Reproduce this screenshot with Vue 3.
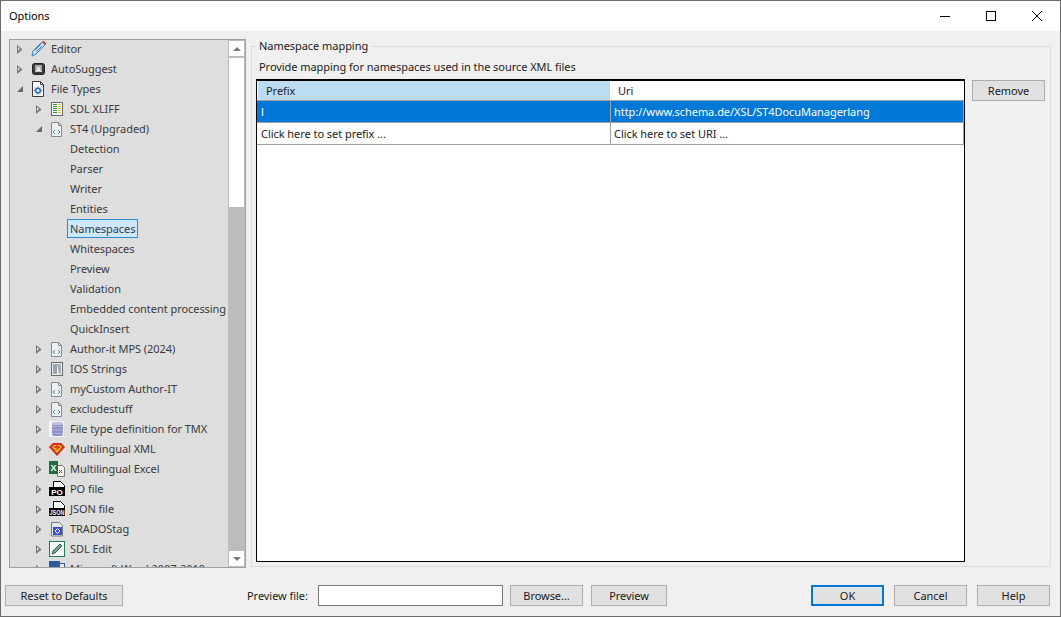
<script setup>
const rows = [
  { label: 'Editor', level: 0, arrow: 'closed', icon: 'pencil' },
  { label: 'AutoSuggest', level: 0, arrow: 'closed', icon: 'key' },
  { label: 'File Types', level: 0, arrow: 'open', icon: 'gear' },
  { label: 'SDL XLIFF', level: 1, arrow: 'closed', icon: 'xliff' },
  { label: 'ST4 (Upgraded)', level: 1, arrow: 'open', icon: 'code' },
  { label: 'Detection', level: 2 },
  { label: 'Parser', level: 2 },
  { label: 'Writer', level: 2 },
  { label: 'Entities', level: 2 },
  { label: 'Namespaces', level: 2, selected: true },
  { label: 'Whitespaces', level: 2 },
  { label: 'Preview', level: 2 },
  { label: 'Validation', level: 2 },
  { label: 'Embedded content processing', level: 2 },
  { label: 'QuickInsert', level: 2 },
  { label: 'Author-it MPS (2024)', level: 1, arrow: 'closed', icon: 'code' },
  { label: 'IOS Strings', level: 1, arrow: 'closed', icon: 'ios' },
  { label: 'myCustom Author-IT', level: 1, arrow: 'closed', icon: 'code' },
  { label: 'excludestuff', level: 1, arrow: 'closed', icon: 'code' },
  { label: 'File type definition for TMX', level: 1, arrow: 'closed', icon: 'db' },
  { label: 'Multilingual XML', level: 1, arrow: 'closed', icon: 'shield' },
  { label: 'Multilingual Excel', level: 1, arrow: 'closed', icon: 'excel' },
  { label: 'PO file', level: 1, arrow: 'closed', icon: 'po' },
  { label: 'JSON file', level: 1, arrow: 'closed', icon: 'json' },
  { label: 'TRADOStag', level: 1, arrow: 'closed', icon: 'trados' },
  { label: 'SDL Edit', level: 1, arrow: 'closed', icon: 'edit' },
  { label: 'Microsoft Word 2007-2019', level: 1, arrow: 'closed', icon: 'word' }
]
</script>

<template>
  <div class="window">
    <header class="titlebar">
      <span class="title">Options</span>
      <div class="controls">
        <svg width="46" height="30" viewBox="0 0 46 30"><path d="M18 15.500h10" stroke="#000" fill="none" /></svg>
        <svg width="46" height="30" viewBox="0 0 46 30"><rect x="18.500" y="10.500" width="9" height="9" stroke="#000" fill="none" /></svg>
        <svg width="46" height="30" viewBox="0 0 46 30"><path d="M18 10l10 10M28 10L18 20" stroke="#000" fill="none" /></svg>
      </div>
    </header>

    <main class="content">
      <nav class="tree">
        <div class="tree-list">
          <div v-for="row in rows" :key="row.label" class="row" :class="'lv' + row.level">
            <span v-if="row.level < 2" class="arrow" :class="row.arrow"></span>
            <svg v-if="row.icon" class="icon" width="18" height="18" viewBox="0 0 18 18">
              <template v-if="row.icon === 'pencil'">
                <path d="M2 16l1-5L12 2l3 3-9 9z" fill="#cfe2f5" stroke="#3f7fc0" />
                <path d="M5 10l6-6M6 12l6-6" stroke="#3f7fc0" fill="none" />
                <path d="M12 2l1.500-1.500 3 3L15 5z" fill="#d04a50" />
              </template>
              <template v-else-if="row.icon === 'key'">
                <rect x="2.500" y="3.500" width="12" height="11" rx="2" fill="#3c3c3c" stroke="#222" />
                <rect x="5" y="5" width="7" height="7" fill="#a8a8a8" />
                <text x="8.500" y="11.500" class="gl" font-size="7" fill="#fff">A</text>
              </template>
              <template v-else-if="row.icon === 'gear'">
                <path d="M2.500 1.500h8l3 3v12h-11z" fill="#f7f7f7" stroke="#3c3c3c" />
                <path d="M10.500 1.500v3h3" fill="none" stroke="#3c3c3c" />
                <circle cx="8" cy="10.500" r="2.300" fill="none" stroke="#2f6fc0" stroke-width="1.600" />
                <path d="M8 6.500v1.500M8 13v1.500M4 10.500h1.500M10.500 10.500H12M5.200 7.700l1 1M10.800 13.300l-1-1M10.800 7.700l-1 1M5.200 13.300l1-1" stroke="#2f6fc0" />
              </template>
              <template v-else-if="row.icon === 'xliff'">
                <rect x="2.500" y="2.500" width="11" height="13" fill="#f5f5f5" stroke="#6a6a6a" />
                <path d="M4 4.500h4M4 6.500h4M4 8.500h4M4 10.500h4M4 12.500h4" stroke="#1e9a3c" />
                <path d="M9 4.500h3M9 6.500h3M9 8.500h3M9 10.500h3M9 12.500h3" stroke="#e8c050" />
              </template>
              <template v-else-if="row.icon === 'code'">
                <path d="M2.500 2.500h7l3 3v11h-10z" fill="#efefef" stroke="#7f8a96" />
                <path d="M9.500 2.500v3h3" fill="none" stroke="#7f8a96" />
                <path d="M6 10l-2 2 2 2M9 10l2 2-2 2" fill="none" stroke="#3f7fc0" />
              </template>
              <template v-else-if="row.icon === 'ios'">
                <rect x="2.500" y="2.500" width="11" height="13" fill="#efefef" stroke="#6a6a6a" />
                <path d="M5 4v10M7 4v10" stroke="#7f8b99" stroke-width="1.500" />
                <path d="M9 4l2 10M11 4v10" stroke="#9aa6b2" stroke-width="1.500" />
              </template>
              <template v-else-if="row.icon === 'db'">
                <rect x="0" y="1" width="15" height="16" fill="#f4f4fa" />
                <rect x="3" y="2" width="11" height="14" rx="2" fill="#8f8fc8" />
                <path d="M3 6.500h11M3 10h11M3 13.500h11" stroke="#b5b5dc" />
                <rect x="3" y="2" width="11" height="3" rx="1.500" fill="#c2c2e4" />
              </template>
              <template v-else-if="row.icon === 'shield'">
                <path d="M4 3h8l4 4-8 9-8-9z" fill="#d42a1c" />
                <path d="M5 5h6l2 2-5 6-5-6z" fill="#f0c91e" />
                <path d="M8 5v2M5 7h6M6.500 10l3-2" stroke="#d42a1c" stroke-width="1.300" fill="none" />
              </template>
              <template v-else-if="row.icon === 'excel'">
                <path d="M8.500 5.500h5l2 2v9h-7z" fill="#f4f4f4" stroke="#777" />
                <rect x="0" y="1" width="9" height="13" fill="#1f6f43" />
                <text x="4.500" y="10.500" class="gl" font-size="9" fill="#fff">X</text>
                <path d="M10 10l3 3M13 10l-3 3" stroke="#555" />
              </template>
              <template v-else-if="row.icon === 'po'">
                <path d="M4.500 1.500h7l4 4v3h-11z" fill="#fff" stroke="#000" />
                <rect x="0" y="7" width="16" height="9" fill="#000" />
                <text x="8" y="14.500" class="gl" font-size="8" fill="#fff">PO</text>
              </template>
              <template v-else-if="row.icon === 'json'">
                <path d="M4.500 1.500h7l4 4v3h-11z" fill="#fff" stroke="#000" />
                <rect x="0" y="8" width="16" height="8" fill="#000" />
                <text x="8" y="14.500" class="gl" font-size="6.500" textLength="15" lengthAdjust="spacingAndGlyphs" fill="#fff">JSON</text>
              </template>
              <template v-else-if="row.icon === 'trados'">
                <path d="M2.500 2.500h8l3 3v10.500h-11z" fill="#e8e8e8" stroke="#7a7a7a" />
                <rect x="4" y="7" width="9" height="8" fill="#3f4fc8" />
                <path d="M8.500 8.500l2.500 2.500-2.500 2.500-2.500-2.500z" fill="none" stroke="#fff" />
              </template>
              <template v-else-if="row.icon === 'edit'">
                <rect x=".5" y="1.500" width="15" height="15" fill="#f7f7f7" stroke="#23795a" />
                <path d="M3 14l1-3 7-7 2 2-7 7z" fill="#7d9f8f" stroke="#2f6b52" />
              </template>
              <template v-else-if="row.icon === 'word'">
                <rect x="0" y="1" width="11" height="14" fill="#2b5a9e" />
                <rect x="10.500" y="3.500" width="5" height="12" fill="#e8eef6" stroke="#2b5a9e" />
              </template>
            </svg>
            <span class="label" :class="{ selected: row.selected }">{{ row.label }}</span>
          </div>
        </div>
        <div class="scrollbar">
          <div class="sb-btn"><span class="tri up"></span></div>
          <div class="sb-thumb"></div>
          <div class="sb-track"></div>
          <div class="sb-btn"><span class="tri down"></span></div>
        </div>
      </nav>

      <fieldset class="group">
        <legend>Namespace mapping</legend>
        <p class="hint">Provide mapping for namespaces used in the source XML files</p>
        <div class="group-body">
          <div class="table">
            <div class="tr head">
              <div class="c1">Prefix</div>
              <div class="c2">Uri</div>
            </div>
            <div class="tr data sel">
              <div class="c1">l</div>
              <div class="c2">http://www.schema.de/XSL/ST4DocuManagerlang</div>
            </div>
            <div class="tr data">
              <div class="c1">Click here to set prefix ...</div>
              <div class="c2">Click here to set URI ...</div>
            </div>
          </div>
          <button class="btn remove">Remove</button>
        </div>
      </fieldset>
    </main>

    <footer class="footer">
      <button class="btn reset">Reset to Defaults</button>
      <div class="preview">
        <label class="pf-label">Preview file:</label>
        <input class="pf-input" type="text" />
        <button class="btn">Browse...</button>
        <button class="btn preview-btn">Preview</button>
      </div>
      <div class="actions">
        <button class="btn ok">OK</button>
        <button class="btn">Cancel</button>
        <button class="btn">Help</button>
      </div>
    </footer>
  </div>
</template>

<style scoped>
.window {
  width: 1061px;
  height: 617px;
  box-sizing: border-box;
  border: 1px solid #6b6b6b;
  background: #f0f0f0;
  display: flex;
  flex-direction: column;
  font: 11px/16px "Noto Sans", "Open Sans", sans-serif;
  letter-spacing: -0.05px;
  color: #1b1b1b;
  overflow: hidden;
}
.gl {
  font-family: "Liberation Sans", sans-serif;
  font-weight: 700;
  text-anchor: middle;
  letter-spacing: 0;
}
.titlebar {
  height: 30px;
  flex: none;
  background: #fff;
  display: flex;
  align-items: center;
  justify-content: space-between;
  padding-left: 8px;
}
.title {
  color: #000;
}
.controls {
  display: flex;
  height: 30px;
}
.content {
  height: 537px;
  flex: none;
  display: flex;
  padding: 8px 9px 0 8px;
  box-sizing: border-box;
}
.tree {
  width: 237px;
  height: 529px;
  flex: none;
  box-sizing: border-box;
  border: 1px solid #a0a0a0;
  background: #dedede;
  display: flex;
  overflow: hidden;
}
.tree-list {
  width: 218px;
  flex: none;
  overflow: hidden;
  margin-top: -1px;
}
.row {
  height: 20px;
  display: flex;
  align-items: center;
  white-space: nowrap;
  color: #3a3a3a;
}
.lv0 { padding-left: 7px; }
.lv1 { padding-left: 26px; }
.lv2 { padding-left: 60px; }
.arrow {
  width: 6px;
  height: 9px;
  flex: none;
  box-sizing: border-box;
  margin-right: 7px;
  position: relative;
}
.arrow.closed {
  border-left: 5px solid #777;
  border-top: 4px solid transparent;
  border-bottom: 4px solid transparent;
}
.arrow.closed::after {
  content: "";
  position: absolute;
  left: -4px;
  top: -2px;
  border-left: 2px solid #dedede;
  border-top: 2px solid transparent;
  border-bottom: 2px solid transparent;
}
.arrow.open {
  height: 6px;
  border-bottom: 6px solid #6a6a6a;
  border-left: 6px solid transparent;
}
.icon {
  flex: none;
}
.label {
  padding: 0 2px;
  border: 1px solid transparent;
  line-height: 17px;
  margin-bottom: 2px;
}
.lv2 .label {
  margin-left: -3px;
}
.label.selected {
  background: #cce8ff;
  border-color: #2a8dd4;
}
.scrollbar {
  width: 17px;
  flex: none;
  display: flex;
  flex-direction: column;
  background: #bcbcbc;
  padding: 1px 0;
  box-sizing: border-box;
}
.sb-btn {
  height: 15px;
  margin: 0 1px;
  background: #fff;
  display: flex;
  align-items: center;
  justify-content: center;
  flex: none;
}
.sb-thumb {
  height: 149px;
  margin: 2px 1px 0;
  background: #fff;
  flex: none;
}
.sb-track {
  flex: 1;
}
.tri {
  width: 0;
  height: 0;
  border-left: 4px solid transparent;
  border-right: 4px solid transparent;
}
.tri.up { border-bottom: 4px solid #777; }
.tri.down { border-top: 4px solid #777; }
.group {
  flex: 1;
  margin: -1px 0 0 5px;
  height: 529px;
  box-sizing: border-box;
  padding: 0 5px 3px 4px;
  border: 1px solid #dcdcdc;
  border-radius: 0;
  min-width: 0;
  display: flex;
  flex-direction: column;
}
legend {
  padding: 0 4px 0 3px;
  margin-left: 0;
  line-height: 16px;
  color: #1b1b1b;
}
.hint {
  margin: 5px 0 4px 3px;
  line-height: 16px;
  height: 16px;
}
.group-body {
  display: flex;
  align-items: flex-start;
  gap: 7px;
  flex: 1;
}
.table {
  width: 709px;
  height: 483px;
  box-sizing: border-box;
  border: 1px solid #000;
  border-top-width: 2px;
  background: #fff;
  flex: none;
}
.tr {
  display: flex;
  box-sizing: border-box;
}
.head {
  height: 20px;
  border-bottom: 1px solid #a0a0a0;
  padding-left: 1px;
}
.head .c1 {
  width: 352px;
  padding-left: 8px;
  background: #bcdcf4;
  box-sizing: border-box;
  line-height: 20px;
}
.head .c2 {
  padding-left: 8px;
  line-height: 20px;
}
.data {
  height: 22px;
  border-bottom: 1px solid #a0a0a0;
  border-right: 1px solid #a0a0a0;
  line-height: 21px;
  padding-left: 1px;
}
.data .c1 {
  width: 353px;
  padding-left: 3px;
  box-sizing: border-box;
  border-right: 1px solid #a0a0a0;
}
.data .c2 {
  padding-left: 3px;
}
.data.sel {
  background: #0078d7;
  color: #fff;
}
.btn {
  width: 73px;
  height: 21px;
  box-sizing: border-box;
  border: 1px solid #adadad;
  background: #e1e1e1;
  color: #1b1b1b;
  font: inherit;
  letter-spacing: inherit;
  padding: 1px 0 0;
  flex: none;
}
.remove {
  margin-top: 1px;
}
.footer {
  flex: 1;
  display: flex;
  align-items: flex-start;
  padding: 17px 10px 0 4px;
}
.reset {
  width: 118px;
}
.preview {
  display: flex;
  align-items: center;
  margin-left: 124px;
}
.pf-label {
  width: 71px;
  flex: none;
}
.pf-input {
  width: 185px;
  height: 21px;
  box-sizing: border-box;
  border: 1px solid #7a7a7a;
  background: #fff;
  margin: 0 7px 0 0;
  padding: 0;
}
.preview-btn {
  width: 76px;
  margin-left: 8px;
}
.actions {
  margin-left: auto;
  display: flex;
  gap: 10px;
}
.ok {
  border: 2px solid #0078d7;
}
</style>
